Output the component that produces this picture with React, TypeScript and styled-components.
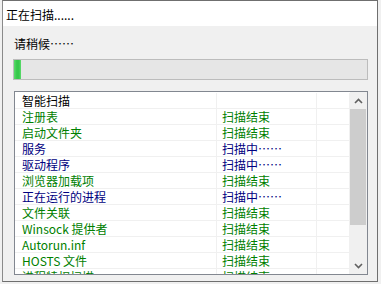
import React from "react";
import styled, { createGlobalStyle } from "styled-components";

const Global = createGlobalStyle`
  html, body { margin: 0; padding: 0; background: #f0f0f0; }
  body { font-family: "Noto Sans CJK SC", "Noto Sans", sans-serif; font-size: 12px; }
`;

const Dialog = styled.div`
  box-sizing: border-box;
  margin-left: 2px;
  width: 376px;
  height: 282px;
  border: 1px solid #6f6f6f;
  border-left-color: #8a8a8a;
  background: #f0f0f0;
  display: flex;
  flex-direction: column;
  overflow: hidden;
`;

const TitleBar = styled.div`
  box-sizing: border-box;
  height: 25px;
  background: #ffffff;
  padding: 2px 0 0 3px;
  line-height: 23px;
  font-size: 12px;
  color: #000;
`;

const Body = styled.div`
  flex: 1;
  display: flex;
  flex-direction: column;
`;

const Label = styled.div`
  margin: 11px 0 0 11px;
  height: 13px;
  line-height: 13px;
  color: #000;
`;

const Progress = styled.div`
  box-sizing: border-box;
  margin: 9px 0 0 10px;
  width: 355px;
  height: 21px;
  border: 1px solid #bcbcbc;
  background: #e6e6e6;
  display: flex;
`;

const Fill = styled.div`
  height: 100%;
  background: linear-gradient(to right, #5cdb6c, #37c84c 40%, #37c84c 70%, #5cdb6c);
`;

const ListBox = styled.div`
  box-sizing: border-box;
  margin: 11px 0 0 11px;
  width: 354px;
  height: 184px;
  border: 1px solid #828790;
  background: #ffffff;
  display: flex;
`;

const Rows = styled.div`
  flex: 1;
  padding-top: 1px;
  overflow: hidden;
`;

const Row = styled.div`
  box-sizing: border-box;
  height: 16px;
  display: grid;
  grid-template-columns: 202px 100px 1fr;
  border-bottom: 1px solid #f0f0f0;
  line-height: 15px;
  color: ${(p: { $tone: string }) => p.$tone};
  white-space: nowrap;
`;

const Cell = styled.div<{ $pad: number }>`
  border-right: 1px solid #f0f0f0;
  padding-left: ${(p) => p.$pad}px;
  overflow: hidden;
`;

const Scrollbar = styled.div`
  width: 17px;
  background: #f0f0f0;
  display: flex;
  flex-direction: column;
`;

const ArrowBtn = styled.div`
  height: 17px;
  display: flex;
  align-items: center;
  justify-content: center;
`;

const Thumb = styled.div`
  height: 116px;
  margin: 0 1px 0 0;
  background: #cdcdcd;
`;

const Track = styled.div`
  flex: 1;
`;

const Chevron = ({ up }: { up?: boolean }) => (
  <svg width="9" height="6" viewBox="0 0 9 6">
    <polyline
      points={up ? "1,5 4.5,1.5 8,5" : "1,1 4.5,4.5 8,1"}
      fill="none"
      stroke="#606060"
      strokeWidth="1.6"
    />
  </svg>
);

const GREEN = "#008000";
const NAVY = "#000080";
const BLACK = "#000000";

const items: { name: string; status: string; tone: string }[] = [
  { name: "智能扫描", status: "", tone: BLACK },
  { name: "注册表", status: "扫描结束", tone: GREEN },
  { name: "启动文件夹", status: "扫描结束", tone: GREEN },
  { name: "服务", status: "扫描中……", tone: NAVY },
  { name: "驱动程序", status: "扫描中……", tone: NAVY },
  { name: "浏览器加载项", status: "扫描结束", tone: GREEN },
  { name: "正在运行的进程", status: "扫描中……", tone: NAVY },
  { name: "文件关联", status: "扫描结束", tone: GREEN },
  { name: "Winsock 提供者", status: "扫描结束", tone: GREEN },
  { name: "Autorun.inf", status: "扫描结束", tone: GREEN },
  { name: "HOSTS 文件", status: "扫描结束", tone: GREEN },
  { name: "进程特权扫描", status: "扫描结束", tone: GREEN },
];

export default function App() {
  const progress = 2;
  return (
    <>
      <Global />
      <Dialog>
        <TitleBar>正在扫描......</TitleBar>
        <Body>
          <Label>请稍候……</Label>
          <Progress>
            <Fill style={{ width: `${progress}%` }} />
          </Progress>
          <ListBox>
            <Rows>
              {items.map((it) => (
                <Row key={it.name} $tone={it.tone}>
                  <Cell $pad={7}>{it.name}</Cell>
                  <Cell $pad={5}>{it.status}</Cell>
                  <Cell $pad={0} />
                </Row>
              ))}
            </Rows>
            <Scrollbar>
              <ArrowBtn>
                <Chevron up />
              </ArrowBtn>
              <Thumb />
              <Track />
              <ArrowBtn>
                <Chevron />
              </ArrowBtn>
            </Scrollbar>
          </ListBox>
        </Body>
      </Dialog>
    </>
  );
}
